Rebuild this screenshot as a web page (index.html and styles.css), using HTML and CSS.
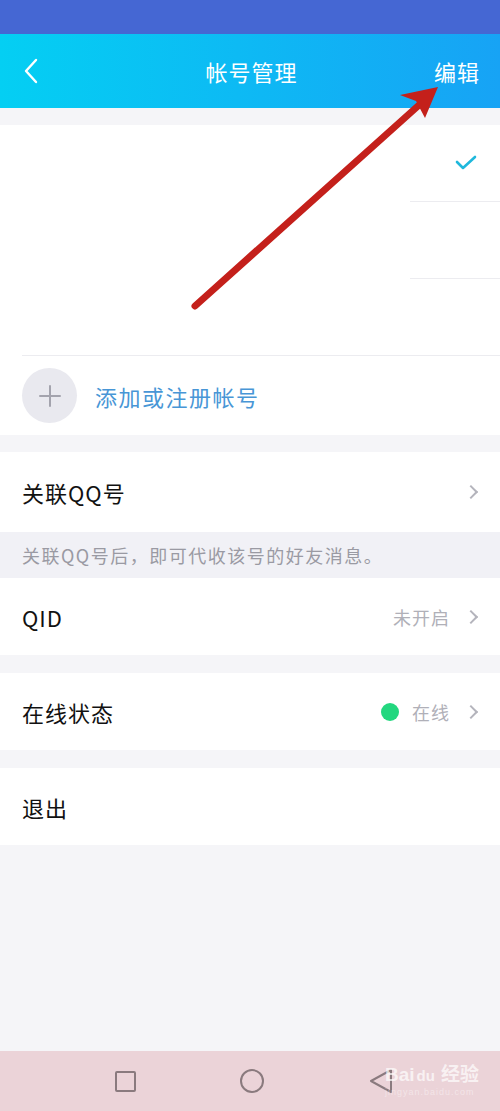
FILE: index.html
```html
<!DOCTYPE html>
<html lang="zh-CN">
<head>
  <meta charset="UTF-8" />
  <meta name="viewport" content="width=device-width, initial-scale=1.0"/>
  <title>帐号管理</title>
  <link rel="stylesheet" href="styles.css">
</head>
<body>
  <div class="phone">
    <div class="status-bar"></div>

    <header class="app-header">
      <span class="back">
        <svg width="16" height="26" viewBox="0 0 16 26"><path d="M13 2 L3 13 L13 24" fill="none" stroke="#fff" stroke-width="2.4" stroke-linecap="round" stroke-linejoin="round"/></svg>
      </span>
      <h1>帐号管理</h1>
      <span class="edit">编辑</span>
    </header>

    <main class="content">
      <!-- 帐号列表 -->
      <section class="card accounts">
        <div class="account-row">
          <div class="account-meta">
            <svg width="22" height="16" viewBox="0 0 22 16"><path d="M2 7 L8 13 L20 2" fill="none" stroke="#1fb8dc" stroke-width="2.6" stroke-linecap="round" stroke-linejoin="round"/></svg>
          </div>
        </div>
        <div class="account-row">
          <div class="account-meta"></div>
        </div>
        <div class="account-row last">
          <div class="account-meta"></div>
        </div>
        <div class="add-row">
          <span class="add-icon">
            <svg width="24" height="24" viewBox="0 0 24 24"><path d="M12 2 V22 M2 12 H22" stroke="#a3a3ad" stroke-width="2" stroke-linecap="round"/></svg>
          </span>
          <span class="add-text">添加或注册帐号</span>
        </div>
      </section>

      <section class="card">
        <div class="list-item tall">
          <span class="label">关联QQ号</span>
          <span class="chevron"></span>
        </div>
      </section>
      <p class="hint">关联QQ号后，即可代收该号的好友消息。</p>

      <section class="card">
        <div class="list-item">
          <span class="label">QID</span>
          <span class="value">未开启</span>
          <span class="chevron"></span>
        </div>
      </section>

      <section class="card spaced">
        <div class="list-item">
          <span class="label">在线状态</span>
          <span class="status-dot"></span>
          <span class="value">在线</span>
          <span class="chevron"></span>
        </div>
      </section>

      <section class="card spaced">
        <div class="list-item">
          <span class="label">退出</span>
        </div>
      </section>
    </main>

    <nav class="sys-nav">
      <span class="nav-square"></span>
      <span class="nav-circle"></span>
      <svg class="nav-back" width="26" height="28" viewBox="0 0 26 28"><path d="M23 3 L3 14 L23 25 Z" fill="none" stroke="#8a7a7e" stroke-width="2" stroke-linejoin="round"/></svg>
    </nav>

    <!-- 截图上的标注箭头 -->
    <svg class="annotation" width="500" height="1111" viewBox="0 0 500 1111">
      <path d="M195 306 L418 106" stroke="#c4201b" stroke-width="7" stroke-linecap="round"/>
      <path d="M438 87 L400 95 L416 101 L425 118 Z" fill="#c4201b"/>
    </svg>

    <div class="watermark">
      <span class="wm-main">Bai<span class="wm-du">du</span>经验</span>
      <span class="wm-sub">jingyan.baidu.com</span>
    </div>
  </div>
</body>
</html>
```

FILE: styles.css
```css
/* General Styles */
* {
  box-sizing: border-box;
}

body {
  margin: 0;
  font-family: "Noto Sans CJK SC", "Noto Sans", sans-serif;
  background-color: #f5f5f8;
  color: #111;
}

.phone {
  position: relative;
  width: 500px;
  height: 1111px;
  display: flex;
  flex-direction: column;
  overflow: hidden;
}

.status-bar {
  height: 34px;
  background-color: #4567d3;
}

/* Header */
.app-header {
  height: 74px;
  display: grid;
  grid-template-columns: 1fr auto 1fr;
  align-items: center;
  padding: 0 20px 0 23px;
  background: linear-gradient(90deg, #04cff3, #17a3f5);
  color: #fff;
}

.app-header h1 {
  margin: 0;
  font-size: 22px;
  font-weight: 400;
  letter-spacing: 1px;
}

.back {
  display: flex;
}

.edit {
  justify-self: end;
  font-size: 22px;
  letter-spacing: 1px;
}

/* Content */
.content {
  flex: 1;
  padding-top: 17px;
}

.card {
  background-color: #fff;
}

.card.spaced {
  margin-top: 18px;
}

.accounts {
  margin-bottom: 17px;
}

.account-row {
  height: 77px;
  display: flex;
  justify-content: flex-end;
}

.account-row .account-meta {
  width: 90px;
  border-bottom: 1px solid #ececf0;
  display: flex;
  align-items: center;
  justify-content: center;
  padding-left: 22px;
}

.account-row.last {
  margin-left: 22px;
  border-bottom: 1px solid #ececf0;
}

.account-row.last .account-meta {
  border-bottom: none;
}

.add-row {
  height: 79px;
  display: flex;
  align-items: center;
  padding-left: 22px;
}

.add-icon {
  width: 55px;
  height: 55px;
  border-radius: 50%;
  background-color: #e9e9ef;
  display: flex;
  align-items: center;
  justify-content: center;
}

.add-text {
  margin-left: 18px;
  font-size: 22px;
  color: #4896d6;
  letter-spacing: 1.5px;
}

.list-item {
  height: 77px;
  display: flex;
  align-items: center;
  padding: 0 24px 0 22px;
}

.list-item.tall {
  height: 80px;
}

.label {
  flex: 1;
  font-size: 22px;
  letter-spacing: 1px;
}

.value {
  font-size: 18px;
  color: #b0b0b8;
  letter-spacing: 1px;
  margin-right: 16px;
}

.chevron {
  width: 10px;
  height: 10px;
  border-top: 2px solid #b4b4bc;
  border-right: 2px solid #b4b4bc;
  transform: rotate(45deg);
}

.status-dot {
  width: 18px;
  height: 18px;
  border-radius: 50%;
  background-color: #23d77f;
  margin-right: 13px;
}

.hint {
  margin: 0;
  height: 46px;
  display: flex;
  align-items: center;
  padding-left: 22px;
  font-size: 18px;
  color: #9a9aa3;
  letter-spacing: 1.5px;
  background-color: #f1f1f6;
}

/* System navigation bar */
.sys-nav {
  height: 60px;
  background-color: #ebd3d8;
  display: flex;
  align-items: center;
  justify-content: space-between;
  padding: 0 106px 0 115px;
}

.nav-square {
  width: 21px;
  height: 21px;
  border: 2px solid #8a7a7e;
  border-radius: 2px;
}

.nav-circle {
  width: 24px;
  height: 24px;
  border: 2px solid #8a7a7e;
  border-radius: 50%;
}

/* Overlays */
.annotation {
  position: absolute;
  top: 0;
  left: 0;
  pointer-events: none;
}

.watermark {
  position: absolute;
  left: 385px;
  top: 1064px;
  display: flex;
  flex-direction: column;
  color: rgba(255, 255, 255, 0.7);
  font-family: "Liberation Sans", "Noto Sans CJK SC", sans-serif;
}

.wm-main {
  font-size: 19px;
  font-weight: 700;
  line-height: 22px;
}

.wm-du {
  font-size: 15px;
  margin: 0 6px 0 2px;
}

.wm-sub {
  font-size: 9px;
  letter-spacing: 1px;
  opacity: 0.6;
}
```
